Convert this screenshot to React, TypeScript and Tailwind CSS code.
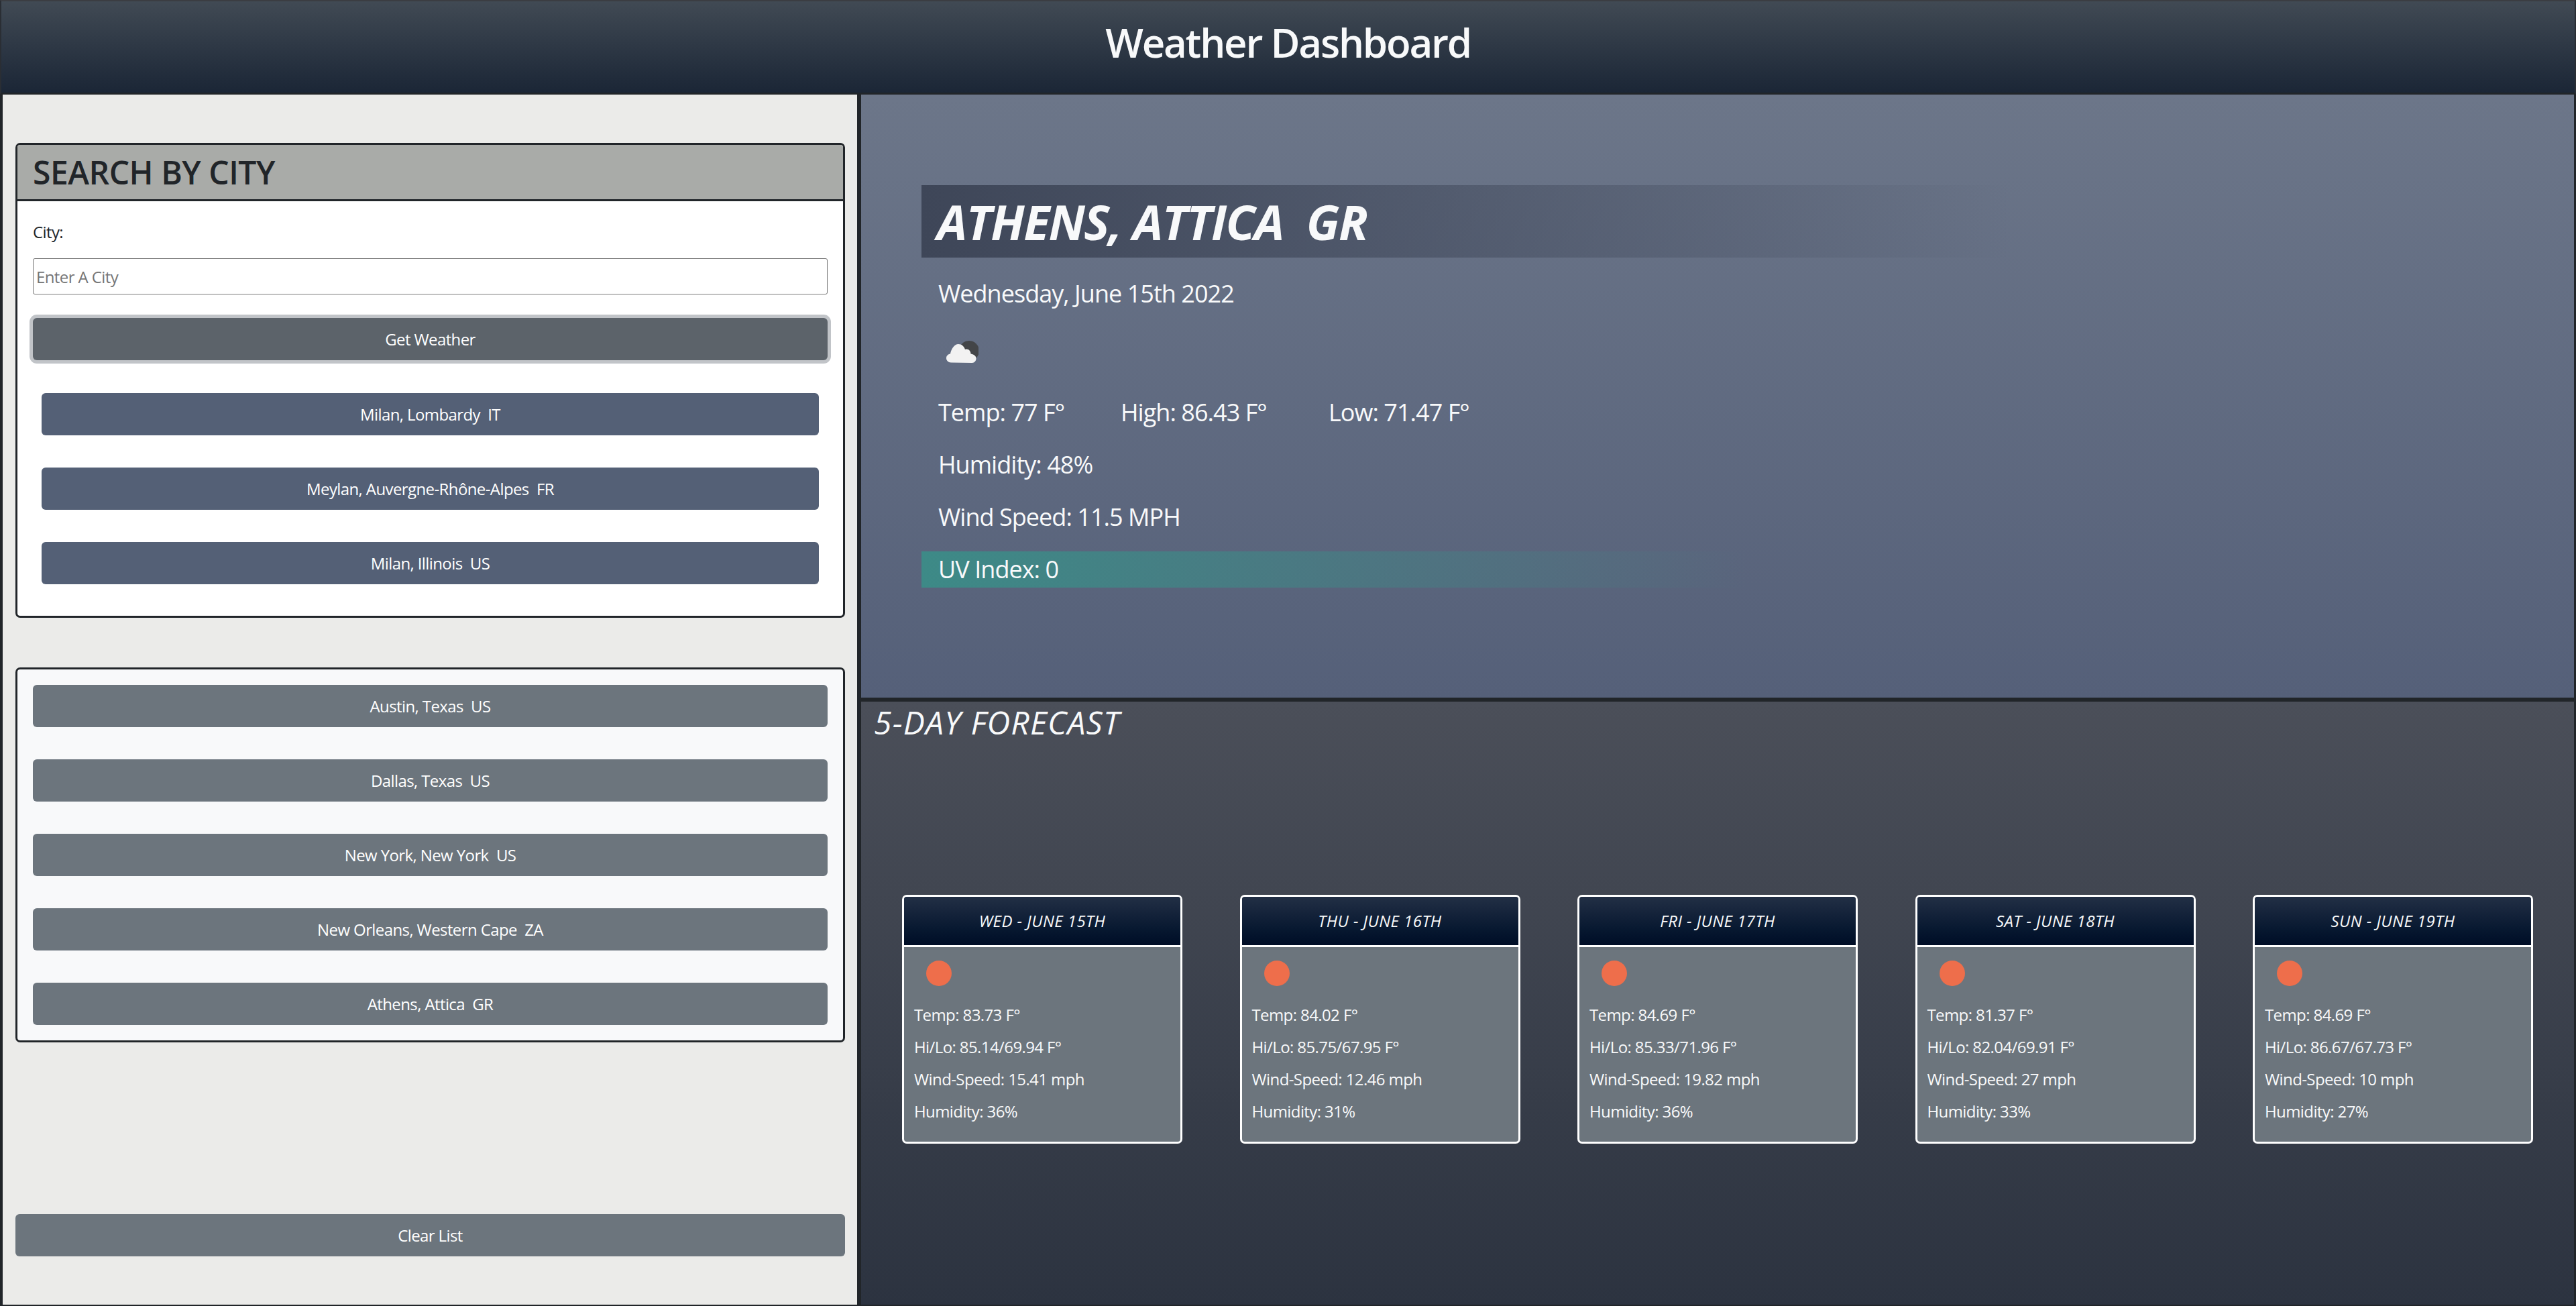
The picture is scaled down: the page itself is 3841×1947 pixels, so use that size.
import React from 'react';

const matches = ['Milan, Lombardy  IT', 'Meylan, Auvergne-Rhône-Alpes  FR', 'Milan, Illinois  US'];
const saved = ['Austin, Texas  US', 'Dallas, Texas  US', 'New York, New York  US', 'New Orleans, Western Cape  ZA', 'Athens, Attica  GR'];

const forecast = [
  { day: 'Wed - June 15th', temp: '83.73', hilo: '85.14/69.94', wind: '15.41', humidity: '36' },
  { day: 'Thu - June 16th', temp: '84.02', hilo: '85.75/67.95', wind: '12.46', humidity: '31' },
  { day: 'Fri - June 17th', temp: '84.69', hilo: '85.33/71.96', wind: '19.82', humidity: '36' },
  { day: 'Sat - June 18th', temp: '81.37', hilo: '82.04/69.91', wind: '27', humidity: '33' },
  { day: 'Sun - June 19th', temp: '84.69', hilo: '86.67/67.73', wind: '10', humidity: '27' },
];

const CityButton = ({ label, className }: { label: string; className: string }) => (
  <button className={`h-[63px] rounded-[6px] text-white text-[24px] whitespace-pre ${className}`}>{label}</button>
);

const CloudIcon = () => (
  <svg width="48" height="33" viewBox="0 0 48 33" className="block">
    <circle cx="34" cy="15" r="15" fill="#434548" />
    <path
      d="M7 32.500C3 32.500 0 29.500 0 26c0-3.500 2.500-6 6-6.500C7 13 12 5 18 5c5 0 8.500 3.500 10 8 2-1 5-.5 7 2 1 1.500 1.500 3 1.500 4.500 3.500.5 8 2.500 8 7 0 3.500-2.500 6.500-6 6.500z"
      fill="#f2f2f2"
    />
  </svg>
);

export default function App() {
  return (
    <div className="h-screen flex flex-col overflow-hidden font-['Open_Sans',sans-serif] tracking-[-0.6px]">
      {/* header */}
      <header className="h-[141px] shrink-0 border-t-[2px] border-x-[2px] border-b-[3px] border-t-[#3b3d42] border-x-[#2a2e34] border-b-[#212529] bg-gradient-to-b from-[#414a54] to-[#1b2636] flex items-center justify-center pb-[14px]">
        <h1 className="text-[60px] font-semibold text-[#f8f9fa] tracking-[-2.2px]">Weather Dashboard</h1>
      </header>

      <div className="flex-1 flex min-h-0 border-b-[2px] border-[#212529]">
        {/* left column */}
        <aside className="w-[1284px] shrink-0 bg-[#ebebe9] border-l-[4px] border-r-[6px] border-[#212529] pl-[19px] pr-[18px] pt-[72px] flex flex-col">
          <section className="h-[708px] shrink-0 bg-white border-[3px] border-[#212529] rounded-[7px] overflow-hidden">
            <h2 className="h-[84px] bg-[#a9aba8] border-b-[3px] border-[#212529] px-[23px] flex items-center text-[48px] font-semibold text-[#212529] uppercase tracking-[-0.48px]">
              Search by City
            </h2>
            <div className="px-[23px] pt-[28px] flex flex-col">
              <label className="text-[24px] leading-[36px] text-[#212529]">City:</label>
              <input
                placeholder="Enter A City"
                className="mt-[21px] h-[54px] border-[1.5px] border-[#767676] rounded-[3px] px-[4px] text-[24px] placeholder:text-[#757575] outline-none"
              />
              <CityButton label="Get Weather" className="mt-[35px] bg-[#5c636a] ring-[5px] ring-[#c1c4c8]" />
              <div className="mt-[49px] px-[13px] flex flex-col gap-[48px]">
                {matches.map(city => (
                  <CityButton key={city} label={city} className="bg-[#546076]" />
                ))}
              </div>
            </div>
          </section>

          <section className="mt-[74px] h-[559px] shrink-0 bg-[#f8f9fa] border-[3px] border-[#212529] rounded-[7px] px-[23px] pt-[23px] flex flex-col gap-[48px]">
            {saved.map(city => (
              <CityButton key={city} label={city} className="bg-[#6c757d]" />
            ))}
          </section>

          <button className="mt-[256px] h-[63px] shrink-0 rounded-[6px] bg-[#6c757d] text-white text-[24px]">Clear List</button>
        </aside>

        {/* right column */}
        <main className="flex-1 min-w-0 flex flex-col border-r-[3px] border-[#212529]">
          <section className="h-[899px] shrink-0 bg-gradient-to-b from-[#6c7689] to-[#556079] pt-[135px] pl-[90px] text-[#f8f9fa]">
            <div className="h-[108px] flex items-center pl-[23px] bg-gradient-to-r from-[#3e4658] to-transparent to-[66%] text-[72px] font-bold italic uppercase whitespace-pre tracking-[-1.57px]">
              Athens, Attica  GR
            </div>
            <div className="pl-[25px] text-[36px] tracking-[-0.96px]">
              <p className="mt-[27px] h-[54px] leading-[54px]">Wednesday, June 15th 2022</p>
              <div className="mt-[43px] ml-[12px]">
                <CloudIcon />
              </div>
              <div className="mt-[47px] h-[54px] leading-[54px] flex">
                <span className="w-[272px]">Temp: 77 F°</span>
                <span className="w-[310px]">High: 86.43 F°</span>
                <span>Low: 71.47 F°</span>
              </div>
              <p className="mt-[24px] h-[54px] leading-[54px]">Humidity: 48%</p>
              <p className="mt-[24px] h-[54px] leading-[54px]">Wind Speed: 11.5 MPH</p>
            </div>
            <div className="mt-[24px] h-[54px] leading-[54px] pl-[25px] text-[36px] tracking-[-0.96px] bg-gradient-to-r from-[#3d8a87] to-transparent to-[50%]">UV Index: 0</div>
          </section>

          <section className="flex-1 min-h-0 border-t-[6px] border-[#212529] bg-gradient-to-b from-[#4b4f59] to-[#2c3340]">
            <h3 className="pl-[19px] pt-[1px] h-[288px] text-[48px] leading-[60px] italic uppercase text-[#f8f9fa] tracking-[1.2px]">5-Day Forecast</h3>
            <div className="px-[61px] flex justify-between">
              {forecast.map(f => (
                <article key={f.day} className="w-[418px] h-[371px] bg-[#6c757d] border-[3px] border-white rounded-[7px] overflow-hidden text-[#f8f9fa] text-[24px] tracking-[-0.6px]">
                  <div className="h-[75px] border-b-[3px] border-white bg-gradient-to-b from-[#222f45] to-[#000d26] flex items-center justify-center italic uppercase tracking-[0.45px]">
                    {f.day}
                  </div>
                  <div className="px-[15px] pt-[20px]">
                    <div className="ml-[18px] w-[38px] h-[38px] rounded-full bg-[#ee6e4b]" />
                    <div className="mt-[25px] flex flex-col gap-[12px] leading-[36px]">
                      <p>Temp: {f.temp} F°</p>
                      <p>Hi/Lo: {f.hilo} F°</p>
                      <p>Wind-Speed: {f.wind} mph</p>
                      <p>Humidity: {f.humidity}%</p>
                    </div>
                  </div>
                </article>
              ))}
            </div>
          </section>
        </main>
      </div>
    </div>
  );
}
